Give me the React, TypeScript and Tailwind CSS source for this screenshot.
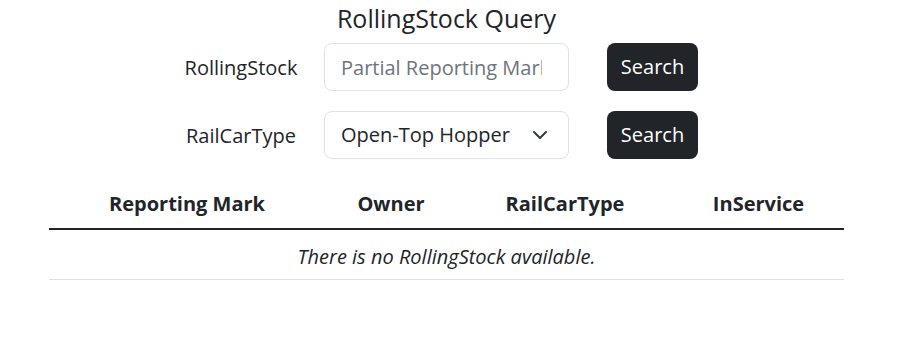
export default function App() {
  return (
    <div
      className="w-[913px] h-[343px] bg-white text-[#212529]"
      style={{ fontFamily: '"Open Sans", "Noto Sans", sans-serif' }}
    >
      {/* Title */}
      <h1 className="text-center text-[25px] leading-[30px] pt-[3px] pr-[20px] font-medium">RollingStock Query</h1>

      {/* Query rows */}
      <div className="mt-[10px] flex flex-col gap-[20px]">
        <div className="flex items-center h-[48px]">
          <label className="ml-[171px] w-[140px] pt-[2px] text-center text-[20px]">RollingStock</label>
          <input
            type="text"
            placeholder="Partial Reporting Mark"
            className="ml-[13px] w-[245px] h-[48px] pl-[16px] pr-[26px] text-[20px] border border-[#dee2e6] rounded-[8px] outline-none placeholder-[#6c757d]"
          />
          <button className="ml-[38px] w-[91px] h-[48px] rounded-[8px] bg-[#212529] text-white text-[20px]">
            Search
          </button>
        </div>
        <div className="flex items-center h-[48px]">
          <label className="ml-[171px] w-[140px] pt-[2px] text-center text-[20px]">RailCarType</label>
          <div className="ml-[13px] w-[245px] h-[48px] pl-[16px] pr-[20px] flex items-center justify-between text-[20px] border border-[#dee2e6] rounded-[8px]">
            <span>Open-Top Hopper</span>
            <svg width="16" height="16" viewBox="0 0 16 16" fill="none" stroke="#343a40" strokeWidth="2" strokeLinecap="round" strokeLinejoin="round">
              <path d="m2 5 6 6 6-6" />
            </svg>
          </div>
          <button className="ml-[38px] w-[91px] h-[48px] rounded-[8px] bg-[#212529] text-white text-[20px]">
            Search
          </button>
        </div>
      </div>

      {/* Results table */}
      <table className="mt-[21px] ml-[49px] w-[795px] text-[20px] border-collapse table-fixed">
        <colgroup>
          <col className="w-[276px]" />
          <col className="w-[132px]" />
          <col className="w-[216px]" />
          <col className="w-[171px]" />
        </colgroup>
        <thead>
          <tr className="border-b-2 border-[#212529]">
            <th className="h-[49px] font-bold text-center">Reporting Mark</th>
            <th className="font-bold text-center">Owner</th>
            <th className="font-bold text-center">RailCarType</th>
            <th className="font-bold text-center">InService</th>
          </tr>
        </thead>
        <tbody>
          <tr className="border-b border-[#dee2e6]">
            <td colSpan={4} className="h-[50px] pt-[5px] text-center italic">
              There is no RollingStock available.
            </td>
          </tr>
        </tbody>
      </table>
    </div>
  );
}
